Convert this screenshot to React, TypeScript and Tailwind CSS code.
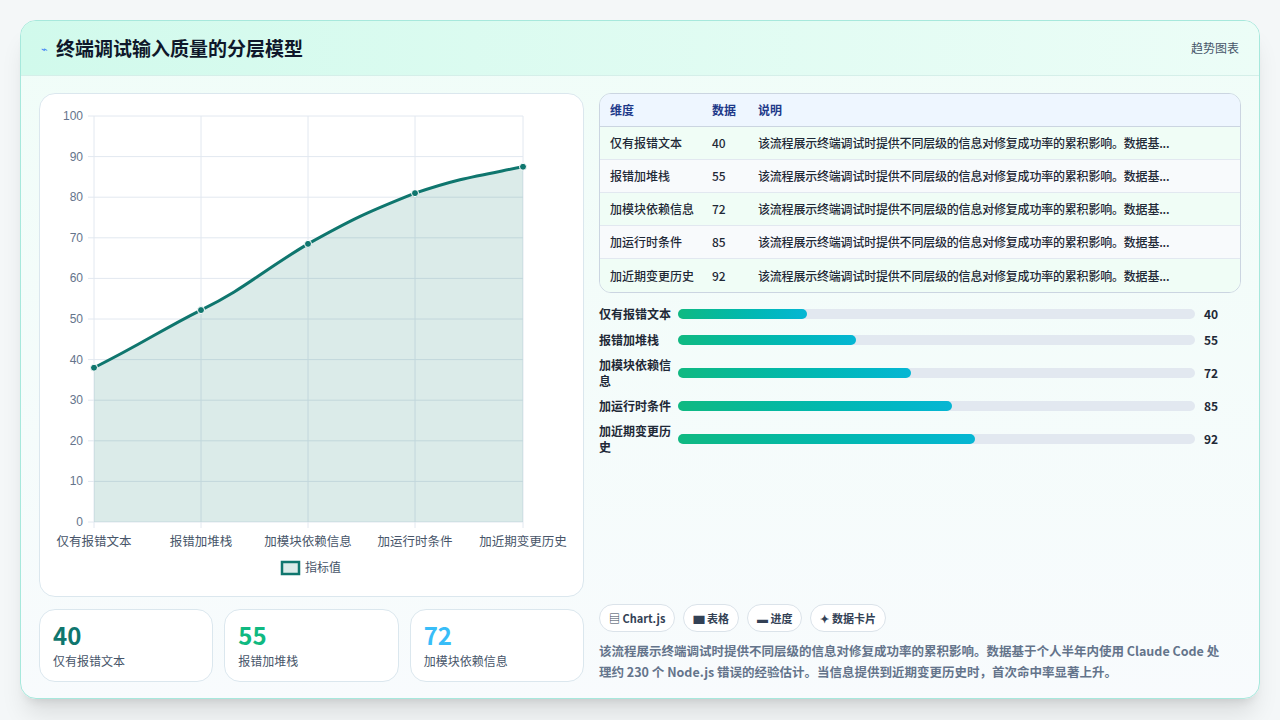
import React from 'react';

const rows = [
  { name: '仅有报错文本', v: 40, w: 129 },
  { name: '报错加堆栈', v: 55, w: 178 },
  { name: '加模块依赖信息', v: 72, w: 233 },
  { name: '加运行时条件', v: 85, w: 274 },
  { name: '加近期变更历史', v: 92, w: 297 },
];

const desc = '该流程展示终端调试时提供不同层级的信息对修复成功率的累积影响。数据基...';

// chart geometry in svg coords (svg placed at card origin 40,93)
const X0 = 54, X1 = 483, Y0 = 428, Y100 = 22;
const yOf = (v: number) => Y0 - (v / 100) * (Y0 - Y100);
const xs = [54, 161, 268, 375, 483];
const vals = [38, 52.2, 68.5, 81, 87.5];

const Chart = () => {
  const pts = xs.map((x, i) => [x, yOf(vals[i])]);
  const line = `M${pts[0][0]},${pts[0][1]} C${pts[0][0] + 50},${pts[0][1] - 25} ${pts[1][0] - 40},${pts[1][1] + 20} ${pts[1][0]},${pts[1][1]} C${pts[1][0] + 45},${pts[1][1] - 22} ${pts[2][0] - 50},${pts[2][1] + 30} ${pts[2][0]},${pts[2][1]} C${pts[2][0] + 45},${pts[2][1] - 25} ${pts[3][0] - 50},${pts[3][1] + 20} ${pts[3][0]},${pts[3][1]} C${pts[3][0] + 45},${pts[3][1] - 15} ${pts[4][0] - 50},${pts[4][1] + 10} ${pts[4][0]},${pts[4][1]}`;
  return (
    <svg width="544" height="503" className="block" style={{ fontFamily: '"Liberation Sans", "Noto Sans CJK SC", sans-serif' }}>
      {[0, 10, 20, 30, 40, 50, 60, 70, 80, 90, 100].map((t) => (
        <g key={t}>
          <line x1={X0 - 6} x2={X1} y1={yOf(t)} y2={yOf(t)} stroke="#e2e8f0" />
          <text x={X0 - 11} y={yOf(t) + 4} fontSize="12" fill="#64748b" textAnchor="end">{t}</text>
        </g>
      ))}
      {xs.map((x) => (
        <line key={x} x1={x} x2={x} y1={Y100} y2={Y0 + 6} stroke="#e2e8f0" />
      ))}
      <path d={`${line} L${X1},${Y0} L${X0},${Y0} Z`} fill="rgba(15,118,110,0.15)" />
      <path d={line} fill="none" stroke="#0f766e" strokeWidth="3" />
      {pts.map(([x, y]) => (
        <circle key={x} cx={x} cy={y} r="3.5" fill="#0f766e" stroke="#fff" strokeWidth="1" />
      ))}
      {rows.map((r, i) => (
        <text key={r.name} x={xs[i]} y={452} fontSize="12.5" fill="#475569" textAnchor="middle">{r.name}</text>
      ))}
      <rect x={242} y={468} width={17} height={12} fill="rgba(15,118,110,0.15)" stroke="#0f766e" strokeWidth="2.5" />
      <text x={265} y={478} fontSize="12" fill="#475569">指标值</text>
    </svg>
  );
};

export default function App() {
  return (
    <div className="w-[1280px] h-[720px] bg-[#f4f7f8] p-5 overflow-hidden" style={{ fontFamily: '"Noto Sans CJK SC", "Noto Sans", sans-serif' }}>
      <div className="h-[679px] rounded-2xl border border-[#a7e8dc] bg-gradient-to-b from-[#f0fdf8] to-[#f8fbfd] shadow-xl overflow-hidden flex flex-col">
        <div className="h-[55px] shrink-0 flex items-center justify-between px-5 bg-gradient-to-r from-[#d1faec] to-[#ecfdf7] border-b border-[#d5efe9]">
          <div className="flex items-center gap-2">
            <span className="text-[11px] text-[#3b82f6]">⌁</span>
            <h1 className="text-[19px] font-bold text-[#0f172a]">终端调试输入质量的分层模型</h1>
          </div>
          <span className="text-[12px] text-[#475569]">趋势图表</span>
        </div>
        <div className="flex gap-[15px] pl-[18px] pr-[18px] pt-[17px]">
          <div className="w-[545px] flex flex-col gap-3">
            <div className="h-[504px] rounded-2xl border border-[#dbe7ee] bg-white overflow-hidden">
              <Chart />
            </div>
            <div className="grid grid-cols-3 gap-[11px]">
              {[
                ['40', '仅有报错文本', 'text-[#0f766e]'],
                ['55', '报错加堆栈', 'text-[#10b981]'],
                ['72', '加模块依赖信息', 'text-[#38bdf8]'],
              ].map(([n, l, c]) => (
                <div key={l} className="h-[73px] rounded-2xl border border-[#dbe7ee] bg-white px-[13px] pt-2">
                  <div className={`text-[24px] font-bold leading-[34px] ${c}`}>{n}</div>
                  <div className="text-[12px] text-[#475569]">{l}</div>
                </div>
              ))}
            </div>
          </div>
          <div className="flex-1 flex flex-col">
            <div className="rounded-xl border border-[#cbd5e1] overflow-hidden text-[12px]">
              <div className="flex h-[33px] items-center bg-[#eef6ff] border-b border-[#cbd5e1] font-semibold text-[#1e3a8a]">
                <div className="w-[112px] pl-[10px]">维度</div>
                <div className="w-[46px]">数据</div>
                <div>说明</div>
              </div>
              {rows.map((r, i) => (
                <div key={r.name} className={`flex h-[33px] items-center text-[#1f2937] font-medium ${i < 4 ? 'border-b border-[#e2e8f0]' : ''} ${i % 2 === 0 ? 'bg-[#f0fdf6]' : 'bg-[#f8fafc]'}`}>
                  <div className="w-[112px] pl-[10px]">{r.name}</div>
                  <div className="w-[46px]">{r.v}</div>
                  <div className="whitespace-nowrap tracking-[-0.2px]">{desc}</div>
                </div>
              ))}
            </div>
            <div className="mt-[12px] flex flex-col gap-[8px] text-[12px] font-semibold text-[#1f2937]">
              {rows.map((r) => (
                <div key={r.name} className="flex items-center">
                  <div className="w-[79px] leading-[16px]">{r.name}</div>
                  <div className="w-[517px] h-[10px] rounded-full bg-[#e2e8f0]">
                    <div className="h-full rounded-full bg-gradient-to-r from-[#10b981] to-[#06b6d4]" style={{ width: r.w }} />
                  </div>
                  <div className="ml-[9px]">{r.v}</div>
                </div>
              ))}
            </div>
            <div className="flex gap-2 pt-[149px]">
              {['▤ Chart.js', '▆ 表格', '▬ 进度', '✦ 数据卡片'].map((t) => (
                <span key={t} className="h-[28px] px-[9px] flex items-center rounded-full border border-[#dbe3ea] bg-white text-[11px] font-semibold text-[#334155]">{t}</span>
              ))}
            </div>
            <p className="mt-[8px] pr-[14px] text-[12.5px] leading-[21px] font-semibold text-[#64748b]">
              该流程展示终端调试时提供不同层级的信息对修复成功率的累积影响。数据基于个人半年内使用 Claude Code 处理约 230 个 Node.js 错误的经验估计。当信息提供到近期变更历史时，首次命中率显著上升。
            </p>
          </div>
        </div>
      </div>
    </div>
  );
}
